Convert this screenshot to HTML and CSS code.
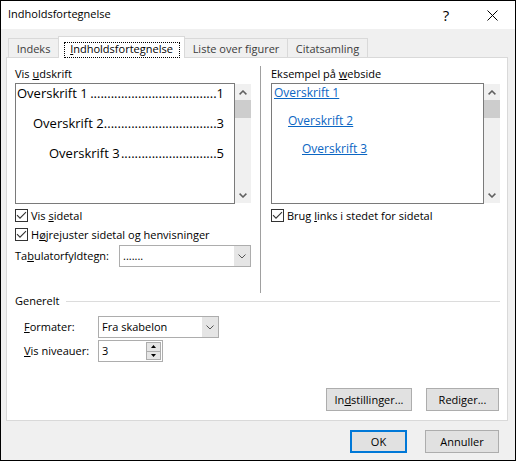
FILE: index.html
```html
<!DOCTYPE html>
<html lang="da">
<head>
<meta charset="utf-8">
<title>Indholdsfortegnelse</title>
<link rel="stylesheet" href="styles.css">
</head>
<body>
<div class="window">
  <div class="titlebar">
    <span class="title">Indholdsfortegnelse</span>
    <span class="cap-btn help">?</span>
    <span class="cap-btn close"><svg width="11" height="11" viewBox="0 0 11 11"><path d="M0.5 0.5L10.5 10.5M10.5 0.5L0.5 10.5" stroke="#000" stroke-width="1" fill="none"/></svg></span>
  </div>
  <div class="client">
    <div class="tabs">
      <div class="tab t-indeks">Indeks</div>
      <div class="tab active"><span class="focus"><u>I</u>ndholdsfortegnelse</span></div>
      <div class="tab t-liste">Liste over figurer</div>
      <div class="tab t-citat">Citatsamling</div>
    </div>
    <div class="panel">
      <div class="upper">
        <div class="col left">
          <div class="label">Vis <u>u</u>dskrift</div>
          <div class="preview-row">
            <div class="preview toc-box">
              <div class="toc lvl1"><span class="ttl">Overskrift 1</span><span class="lead">.....................................1</span></div>
              <div class="toc lvl2"><span class="ttl">Overskrift 2</span><span class="lead">.................................3</span></div>
              <div class="toc lvl3"><span class="ttl">Overskrift 3</span><span class="lead">............................5</span></div>
            </div>
            <div class="sb">
              <div class="sb-btn"><svg width="8" height="5" viewBox="0 0 8 5"><path d="M0.6 4.4L4 1L7.4 4.4" stroke="#606060" stroke-width="1.5" fill="none"/></svg></div>
              <div class="thumb"></div>
              <div class="track"></div>
              <div class="sb-btn"><svg width="8" height="5" viewBox="0 0 8 5"><path d="M0.6 0.6L4 4L7.4 0.6" stroke="#606060" stroke-width="1.5" fill="none"/></svg></div>
            </div>
          </div>
          <div class="check first"><span class="cb"><svg width="11" height="11" viewBox="0 0 11 11"><path d="M1 5.2L4 8.2L10 2.2" stroke="#333" stroke-width="1.1" fill="none"/></svg></span><span>Vis <u>s</u>idetal</span></div>
          <div class="check second"><span class="cb"><svg width="11" height="11" viewBox="0 0 11 11"><path d="M1 5.2L4 8.2L10 2.2" stroke="#333" stroke-width="1.1" fill="none"/></svg></span><span>H<u>ø</u>jrejuster sidetal og henvisninger</span></div>
          <div class="tabfill">
            <span>Ta<u>b</u>ulatorfyldtegn:</span>
            <div class="combo wide"><span class="val">.......</span><span class="dd"><svg width="8" height="5" viewBox="0 0 8 5"><path d="M0.5 0.5L4 4L7.5 0.5" stroke="#555" stroke-width="1" fill="none"/></svg></span></div>
          </div>
        </div>
        <div class="sep"></div>
        <div class="col right">
          <div class="label">Eksempel på <u>w</u>ebside</div>
          <div class="preview-row">
            <div class="preview web-box">
              <div class="lnk lvl1"><span class="link">Overskrift 1</span></div>
              <div class="lnk lvl2"><span class="link">Overskrift 2</span></div>
              <div class="lnk lvl3"><span class="link">Overskrift 3</span></div>
            </div>
            <div class="sb">
              <div class="sb-btn"><svg width="8" height="5" viewBox="0 0 8 5"><path d="M0.6 4.4L4 1L7.4 4.4" stroke="#606060" stroke-width="1.5" fill="none"/></svg></div>
              <div class="thumb"></div>
              <div class="track"></div>
              <div class="sb-btn"><svg width="8" height="5" viewBox="0 0 8 5"><path d="M0.6 0.6L4 4L7.4 0.6" stroke="#606060" stroke-width="1.5" fill="none"/></svg></div>
            </div>
          </div>
          <div class="check first"><span class="cb"><svg width="11" height="11" viewBox="0 0 11 11"><path d="M1 5.2L4 8.2L10 2.2" stroke="#333" stroke-width="1.1" fill="none"/></svg></span><span>Brug <u>l</u>inks i stedet for sidetal</span></div>
        </div>
      </div>
      <div class="group">
        <span>Generelt</span><span class="gline"></span>
      </div>
      <div class="frow first">
        <span class="flabel"><u>F</u>ormater:</span>
        <div class="combo fmt"><span class="val">Fra skabelon</span><span class="dd"><svg width="8" height="5" viewBox="0 0 8 5"><path d="M0.5 0.5L4 4L7.5 0.5" stroke="#555" stroke-width="1" fill="none"/></svg></span></div>
      </div>
      <div class="frow">
        <span class="flabel"><u>V</u>is niveauer:</span>
        <div class="spin"><span class="val">3</span><span class="arrows"><span class="arr"><svg width="5" height="3" viewBox="0 0 5 3"><path d="M0 3L2.5 0L5 3Z" fill="#000"/></svg></span><span class="arr"><svg width="5" height="3" viewBox="0 0 5 3"><path d="M0 0L2.5 3L5 0Z" fill="#000"/></svg></span></span></div>
      </div>
      <div class="panel-buttons">
        <span class="btn b-ind">In<u>d</u>stillinger...</span>
        <span class="btn b-red">Redi<u>g</u>er...</span>
      </div>
    </div>
    <div class="dialog-buttons">
      <span class="btn b-ok">OK</span>
      <span class="btn b-ann">Annuller</span>
    </div>
  </div>
</div>
</body>
</html>
```

FILE: styles.css
```css
* { box-sizing: border-box; margin: 0; padding: 0; }
html, body { background: #fff; }
body {
  margin: 0;
  font-family: "Open Sans", "Liberation Sans", sans-serif;
  font-size: 11px;
  line-height: 16px;
  color: #000;
}
u { text-decoration: underline; text-underline-offset: 1px; }

.window {
  width: 516px;
  height: 461px;
  border: 1px solid #000;
  background: #f0f0f0;
  display: flex;
  flex-direction: column;
}

.titlebar {
  height: 28px;
  background: #fff;
  display: flex;
  align-items: center;
  padding-left: 7px;
}
.title { flex: 1; padding-bottom: 2px; }
.cap-btn {
  width: 46px;
  height: 28px;
  display: flex;
  align-items: center;
  justify-content: center;
}
.help { font-size: 15px; padding-bottom: 1px; }
.close svg { display: block; }

.client {
  flex: 1;
  display: flex;
  flex-direction: column;
}

.tabs {
  display: flex;
  align-items: flex-end;
  height: 21px;
  margin-top: 7px;
  padding-left: 7px;
}
.tab {
  height: 19px;
  border: 1px solid #d9d9d9;
  border-bottom: none;
  margin-left: -1px;
  padding-top: 2px;
  text-align: center;
  color: #3c3c3c;
  background: #f0f0f0;
}
.t-indeks { width: 51px; margin-left: 0; }
.t-liste { width: 104px; }
.t-citat { width: 81px; }
.tab.active {
  width: 127px;
  height: 22px;
  margin-bottom: -1px;
  background: #fff;
  color: #000;
  position: relative;
  z-index: 1;
  padding-top: 4px;
}
.focus {
  display: inline-block;
  width: 116px;
  height: 16px;
  border: 1px dotted #000;
  line-height: 12px;
  padding-bottom: 2px;
}

.panel {
  margin-left: 5px;
  width: 502px;
  height: 364px;
  border: 1px solid #d9d9d9;
  background: #fff;
  padding: 8px 6px 9px 8px;
  display: flex;
  flex-direction: column;
}

.upper {
  display: flex;
  height: 227px;
}
.col.left { width: 236px; }
.sep { width: 1px; background: #a0a0a0; margin-left: 9px; }
.col.right { width: 229px; margin-left: 10px; }

.label { height: 16px; margin-bottom: 1px; }

.preview-row { display: flex; height: 121px; }
.preview {
  border: 1px solid #7a7a7a;
  background: #fff;
}
.toc-box { width: 220px; padding: 0 10px 0 1px; }
.web-box { width: 213px; padding: 1px 0 0 2px; }

.toc {
  display: flex;
  justify-content: space-between;
  white-space: nowrap;
  height: 18px;
  line-height: 18px;
  font-size: 13px;
  margin-bottom: 12px;
}
.toc .ttl { flex: none; }
.toc .lead { flex: none; }
.toc.lvl2 { margin-left: 16px; }
.toc.lvl3 { margin-left: 32px; }

.lnk {
  height: 16px;
  line-height: 16px;
  font-size: 12px;
  margin-bottom: 12px;
  white-space: nowrap;
}
.lnk.lvl2 { padding-left: 14px; }
.lnk.lvl3 { padding-left: 28px; }
.link { color: #0b66c3; text-decoration: underline; }

.sb {
  width: 16px;
  height: 119px;
  margin-top: 1px;
  background: #f0f0f0;
  display: flex;
  flex-direction: column;
}
.sb-btn {
  height: 16px;
  display: flex;
  align-items: center;
  justify-content: center;
}
.sb-btn svg { display: block; }
.thumb { height: 18px; background: #cdcdcd; }
.track { flex: 1; }

.check {
  display: flex;
  align-items: center;
  height: 17px;
  margin-top: 2px;
  white-space: nowrap;
}
.check.first { margin-top: 3px; }
.cb {
  width: 13px;
  height: 13px;
  border: 1px solid #333;
  background: #fff;
  margin-right: 3px;
  flex: none;
}
.cb svg { display: block; }

.tabfill {
  display: flex;
  align-items: center;
  justify-content: space-between;
  height: 22px;
  margin-top: 2px;
}

.combo {
  display: flex;
  height: 22px;
  border: 1px solid #adadad;
  background: #fff;
}
.combo .val {
  flex: 1;
  padding-left: 3px;
  line-height: 19px;
  white-space: nowrap;
}
.combo .dd {
  width: 16px;
  background: #e5e5e5;
  display: flex;
  align-items: center;
  justify-content: center;
}
.combo .dd svg { display: block; }
.combo.wide { width: 132px; }
.combo.fmt { width: 121px; }

.group {
  display: flex;
  align-items: center;
  height: 16px;
}
.gline {
  flex: 1;
  height: 1px;
  background: #dcdcdc;
  margin-left: 7px;
  margin-right: 1px;
}

.frow {
  display: flex;
  align-items: center;
  height: 22px;
  margin-top: 2px;
  padding-left: 9px;
}
.frow.first { margin-top: 7px; }
.flabel { width: 74px; }

.spin {
  display: flex;
  width: 65px;
  height: 22px;
  border: 1px solid #adadad;
  background: #fff;
  padding: 1px 1px 1px 0;
}
.spin .val { flex: 1; padding-left: 3px; line-height: 18px; }
.spin .arrows {
  width: 15px;
  display: flex;
  flex-direction: column;
}
.spin .arr {
  flex: 1;
  border: 1px solid #adadad;
  background: #e5e5e5;
  display: flex;
  align-items: center;
  justify-content: center;
}
.spin .arr + .arr { border-top: none; }
.spin .arr svg { display: block; }

.btn {
  display: flex;
  align-items: center;
  justify-content: center;
  height: 23px;
  border: 1px solid #adadad;
  background: #e1e1e1;
  white-space: nowrap;
}

.panel-buttons {
  margin-top: auto;
  display: flex;
  justify-content: flex-end;
  gap: 14px;
  padding-right: 2px;
}
.b-ind { width: 86px; }
.b-red { width: 73px; }

.dialog-buttons {
  margin-top: 9px;
  display: flex;
  justify-content: flex-end;
  gap: 18px;
  padding-right: 16px;
}
.b-ok { width: 57px; border: 2px solid #0078d7; }
.b-ann { width: 74px; }
```
